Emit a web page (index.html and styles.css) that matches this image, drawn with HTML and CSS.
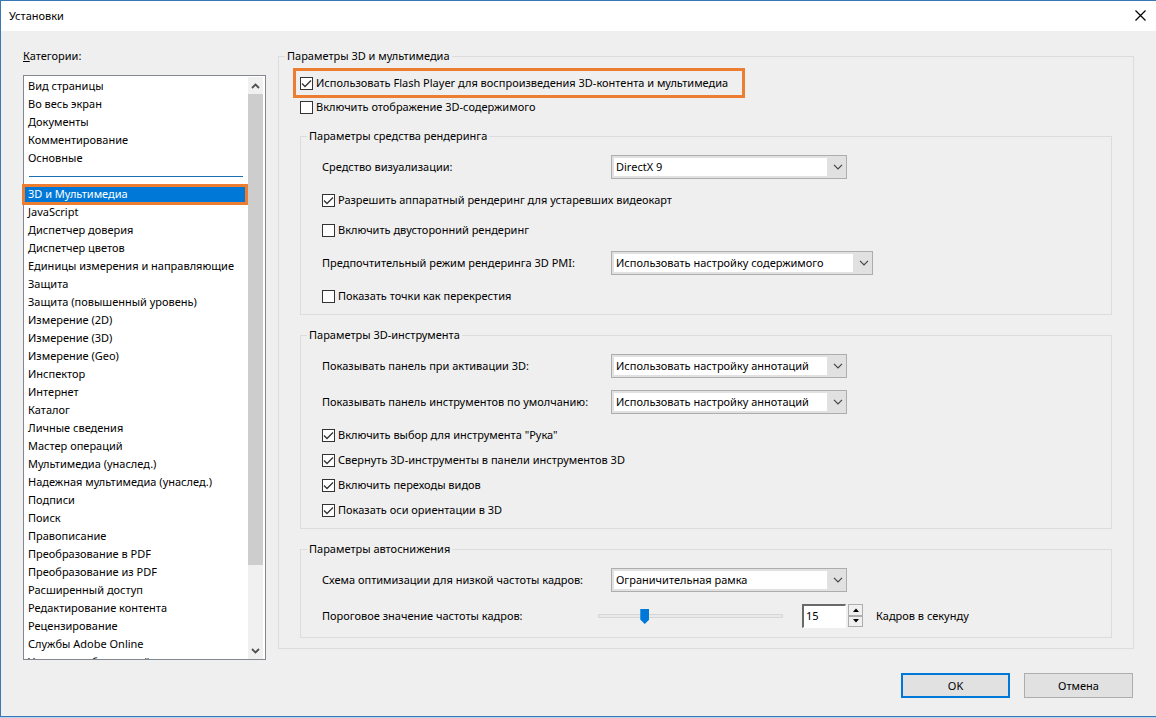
FILE: index.html
```html
<!DOCTYPE html>
<html lang="ru">
<head>
<meta charset="utf-8">
<title>Установки</title>
<link rel="stylesheet" href="styles.css">
</head>
<body>
<div class="window">
  <header class="titlebar">
    <h1 class="title">Установки</h1>
    <button class="close" type="button" aria-label="Закрыть">
      <svg width="11" height="11" viewBox="0 0 11 11"><path d="M0.5 0.5L10.5 10.5M10.5 0.5L0.5 10.5" stroke="#000" stroke-width="1.2" fill="none"/></svg>
    </button>
  </header>
  <main class="content">
    <section class="sidebar">
      <div class="caption" id="categories"><u>К</u>атегории:</div>
      <div class="listbox">
        <ul class="items" role="listbox" aria-labelledby="categories" tabindex="0">
          <li role="option">Вид страницы</li>
          <li role="option">Во весь экран</li>
          <li role="option">Документы</li>
          <li role="option">Комментирование</li>
          <li role="option">Основные</li>
          <li class="divider" role="presentation"></li>
          <li class="selected" role="option" aria-selected="true">3D и Мультимедиа</li>
          <li role="option">JavaScript</li>
          <li role="option">Диспетчер доверия</li>
          <li role="option">Диспетчер цветов</li>
          <li role="option">Единицы измерения и направляющие</li>
          <li role="option">Защита</li>
          <li role="option">Защита (повышенный уровень)</li>
          <li role="option">Измерение (2D)</li>
          <li role="option">Измерение (3D)</li>
          <li role="option">Измерение (Geo)</li>
          <li role="option">Инспектор</li>
          <li role="option">Интернет</li>
          <li role="option">Каталог</li>
          <li role="option">Личные сведения</li>
          <li role="option">Мастер операций</li>
          <li role="option">Мультимедиа (унаслед.)</li>
          <li role="option">Надежная мультимедиа (унаслед.)</li>
          <li role="option">Подписи</li>
          <li role="option">Поиск</li>
          <li role="option">Правописание</li>
          <li role="option">Преобразование в PDF</li>
          <li role="option">Преобразование из PDF</li>
          <li role="option">Расширенный доступ</li>
          <li role="option">Редактирование контента</li>
          <li role="option">Рецензирование</li>
          <li role="option">Службы Adobe Online</li>
          <li role="option">Установка обновлений</li>
        </ul>
        <div class="scrollbar" aria-hidden="true">
          <svg class="arrow" width="9" height="6" viewBox="0 0 9 6"><path d="M1 5L4.500 1.500L8 5" stroke="#505050" stroke-width="1.800" fill="none"/></svg>
          <div class="track"><div class="thumb"></div></div>
          <svg class="arrow" width="9" height="6" viewBox="0 0 9 6"><path d="M1 1L4.500 4.500L8 1" stroke="#505050" stroke-width="1.800" fill="none"/></svg>
        </div>
      </div>
    </section>

    <section class="panel">
      <fieldset class="group outer">
        <legend>Параметры 3D и мультимедиа</legend>
        <label class="check highlight"><input type="checkbox" checked>Использовать Flash Player для воспроизведения 3D-контента и мультимедиа</label>
        <label class="check plain"><input type="checkbox">Включить отображение 3D-содержимого</label>

        <fieldset class="group inner">
          <legend>Параметры средства рендеринга</legend>
          <div class="row">
            <label class="name" for="renderer">Средство визуализации:</label>
            <select class="combo" id="renderer"><option>DirectX 9</option></select>
          </div>
          <label class="check"><input type="checkbox" checked>Разрешить аппаратный рендеринг для устаревших видеокарт</label>
          <label class="check"><input type="checkbox">Включить двусторонний рендеринг</label>
          <div class="row">
            <label class="name" for="pmi">Предпочтительный режим рендеринга 3D PMI:</label>
            <select class="combo wide" id="pmi"><option>Использовать настройку содержимого</option></select>
          </div>
          <label class="check"><input type="checkbox">Показать точки как перекрестия</label>
        </fieldset>

        <fieldset class="group inner">
          <legend>Параметры 3D-инструмента</legend>
          <div class="row">
            <label class="name" for="panel3d">Показывать панель при активации 3D:</label>
            <select class="combo" id="panel3d"><option>Использовать настройку аннотаций</option></select>
          </div>
          <div class="row">
            <label class="name" for="toolbar">Показывать панель инструментов по умолчанию:</label>
            <select class="combo" id="toolbar"><option>Использовать настройку аннотаций</option></select>
          </div>
          <div class="stack">
            <label class="check"><input type="checkbox" checked>Включить выбор для инструмента "Рука"</label>
            <label class="check"><input type="checkbox" checked>Свернуть 3D-инструменты в панели инструментов 3D</label>
            <label class="check"><input type="checkbox" checked>Включить переходы видов</label>
            <label class="check"><input type="checkbox" checked>Показать оси ориентации в 3D</label>
          </div>
        </fieldset>

        <fieldset class="group inner">
          <legend>Параметры автоснижения</legend>
          <div class="row">
            <label class="name" for="scheme">Схема оптимизации для низкой частоты кадров:</label>
            <select class="combo" id="scheme"><option>Ограничительная рамка</option></select>
          </div>
          <div class="row">
            <label class="name short" for="rate">Пороговое значение частоты кадров:</label>
            <input class="slider" id="rate" type="range" min="1" max="60" value="15">
            <div class="spinner">
              <input class="number" type="text" value="15" aria-label="Кадров в секунду">
              <div class="steps">
                <button type="button" aria-label="Больше"><svg width="6" height="4" viewBox="0 0 6 4"><path d="M0 4L3 0.500L6 4Z"/></svg></button>
                <button type="button" aria-label="Меньше"><svg width="6" height="4" viewBox="0 0 6 4"><path d="M0 0L3 3.500L6 0Z"/></svg></button>
              </div>
            </div>
            <span>Кадров в секунду</span>
          </div>
        </fieldset>
      </fieldset>
    </section>
  </main>
  <footer class="actions">
    <button class="action primary" type="button">OK</button>
    <button class="action" type="button">Отмена</button>
  </footer>
</div>
</body>
</html>
```
FILE: styles.css
```css
* {
  box-sizing: border-box;
}

body {
  margin: 0;
  background: #b5d5ee;
  color: #000;
  font: 11px/18px "Noto Sans", "Open Sans", sans-serif;
}

button,
input,
select {
  margin: 0;
  color: inherit;
  font: inherit;
}

.window {
  display: flex;
  flex-direction: column;
  min-height: calc(100vh - 1px);
  border: 1px solid #3a78b4;
  border-right-width: 0;
  background: #efefef;
}

.titlebar {
  display: flex;
  align-items: center;
  justify-content: space-between;
  height: 30px;
  padding: 0 10px 0 8px;
  background: #fff;
}

.title {
  margin: 0;
  font-size: 11px;
  font-weight: 400;
}

.close {
  display: flex;
  padding: 0 0 2px;
  border: 0;
  background: none;
}

.content {
  display: flex;
  gap: 12px;
  padding: 16px 22px 0;
}

.sidebar {
  display: flex;
  flex: 0 0 243px;
  flex-direction: column;
  gap: 10px;
  min-width: 0;
}

.listbox {
  display: flex;
  height: 585px;
  padding: 1px 1px 0;
  border: 1px solid #828790;
  background: #fff;
}

.items {
  flex: 1;
  min-width: 0;
  margin: 0;
  padding: 0;
  overflow-y: clip;
  list-style: none;
  white-space: nowrap;
}

.items li {
  height: 18px;
  padding-left: 3px;
}

.items .divider {
  padding: 9px 5px 0 4px;
}

.divider::before {
  display: block;
  border-top: 1px solid #1a6fb5;
  content: "";
}

.items .selected {
  position: relative;
  background: #0078d7;
  color: #fff;
}

.selected::after {
  position: absolute;
  inset: -1px 0 -2px -3px;
  border: 3px solid #ed7d31;
  content: "";
}

.scrollbar {
  display: flex;
  flex: 0 0 16px;
  flex-direction: column;
  align-items: center;
  border-right: 1px solid #fff;
  background: #f0f0f0;
}

.arrow {
  margin: 6px 0 5px;
}

.track {
  flex: 1;
  width: 100%;
}

.thumb {
  height: 86%;
  background: #cdcdcd;
}

.panel {
  flex: 1;
  min-width: 0;
}

.group {
  display: flex;
  flex-direction: column;
  align-items: flex-start;
  min-width: 0;
  margin: 0;
  border: 1px solid #dcdcdc;
}

legend {
  height: 18px;
  padding: 0 2px;
}

.outer {
  padding: 3px 21px 10px 14px;
}

.outer > legend {
  margin-left: -8px;
}

.inner {
  gap: 12px;
  align-self: stretch;
  margin: 11px 0 0 7px;
  padding: 10px 20px 9px 21px;
}

.inner > legend {
  margin-left: -15px;
}

.check {
  display: flex;
  align-items: center;
  gap: 3px;
  white-space: nowrap;
}

.check input {
  width: 13px;
  height: 13px;
  border: 1px solid #333;
  appearance: none;
  background: #fff;
}

.check input:checked {
  background: #fff url("data:image/svg+xml,%3Csvg xmlns='http://www.w3.org/2000/svg' viewBox='0 0 11 11'%3E%3Cpath d='M1 5.500L4 8.500L10 2.500' fill='none' stroke='%23333' stroke-width='1.300'/%3E%3C/svg%3E") center / 11px 11px no-repeat;
}

.highlight {
  padding: 3px 14px 3px 4px;
  border: 3px solid #ed7d31;
}

.plain {
  margin-left: 7px;
}

.stack {
  display: grid;
  gap: 7px;
}

.row {
  display: flex;
  align-items: center;
  white-space: nowrap;
}

.name {
  width: 289px;
}

.name.short {
  width: 276px;
}

.combo {
  width: 236px;
  height: 24px;
  padding: 0 20px 0 4px;
  border: 1px solid #adadad;
  border-radius: 0;
  appearance: none;
  background:
    url("data:image/svg+xml,%3Csvg xmlns='http://www.w3.org/2000/svg' viewBox='0 0 10 6'%3E%3Cpath d='M1 0.800L5 4.800L9 0.800' fill='none' stroke='%23444' stroke-width='1.200'/%3E%3C/svg%3E") right 3px center / 10px 6px no-repeat,
    linear-gradient(#fff, #fff) 2px 2px / calc(100% - 21px) calc(100% - 4px) no-repeat,
    #e1e1e1;
}

.combo.wide {
  width: 262px;
}

.slider {
  width: 185px;
  height: 24px;
  margin-right: 19px;
  appearance: none;
  background: none;
}

.slider::-webkit-slider-runnable-track {
  height: 4px;
  border: 1px solid #d6d6d6;
  background: #e7eaea;
}

.slider::-webkit-slider-thumb {
  width: 9px;
  height: 15px;
  margin-top: -6px;
  appearance: none;
  background: #0078d7;
  clip-path: polygon(0 0, 100% 0, 100% 70%, 50% 100%, 0 70%);
}

.spinner {
  display: flex;
  gap: 2px;
  margin-right: 13px;
}

.number {
  width: 44px;
  height: 24px;
  padding: 0 2px 2px;
  border: 1px solid #fff;
  border-top: 2px solid #696969;
  border-left: 2px solid #696969;
  background: #fff;
}

.steps {
  display: grid;
  width: 15px;
  height: 23px;
}

.steps button {
  display: flex;
  align-items: center;
  justify-content: center;
  padding: 0;
  border: 1px solid #adadad;
  background: #f0f0f0;
}

.actions {
  display: flex;
  justify-content: flex-end;
  gap: 14px;
  padding: 13px 23px 18px;
}

.action {
  width: 109px;
  height: 25px;
  padding: 0;
  border: 1px solid #adadad;
  background: #e1e1e1;
}

.action.primary {
  border: 2px solid #0078d7;
}
```
